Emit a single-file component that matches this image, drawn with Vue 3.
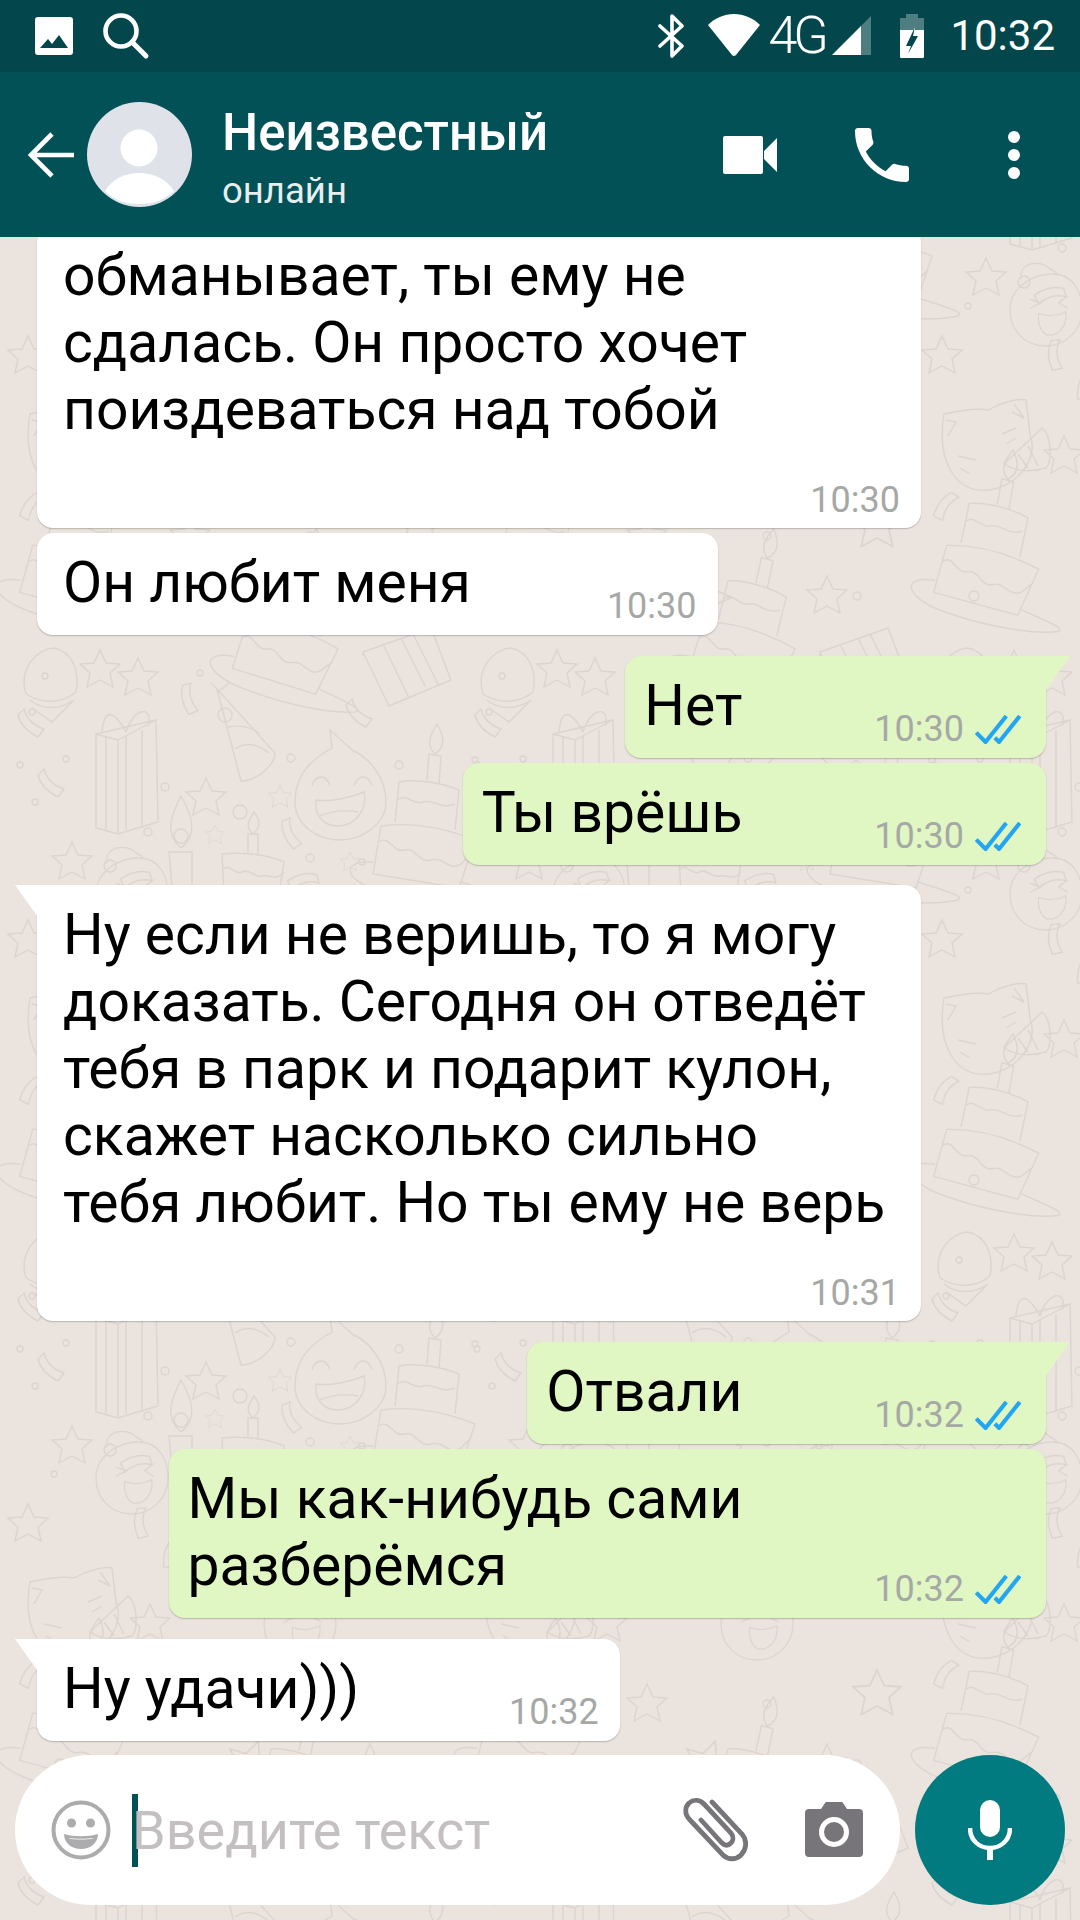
<template>
  <div class="screen">
    <!-- doodle wallpaper -->
    <svg class="wall" width="1080" height="1920" viewBox="0 0 1080 1920">
      <defs>
        <g id="d-gift">
          <path d="M-32 -38 L28 -52 L30 50 L-10 62 L-32 56 Z M-10 -32 L-10 62 M28 -52 L-10 -32 M-32 -38 L-10 -32" />
          <path d="M-22 -36 L-22 58 M-2 -36 L-2 58 M14 -42 L14 56 M-2 -40 C-14 -62 -24 -64 -26 -40 M-2 -40 C6 -66 26 -66 20 -46" />
        </g>
        <g id="d-hat">
          <path d="M-28 -46 L-4 46 C12 46 30 30 30 18 Z M-18 -8 C-6 -10 6 -8 14 -2 M-10 14 C2 6 14 10 24 18 M-34 -52 L-26 -44 L-16 -52" />
          <circle cx="-20" cy="-20" r="7" />
        </g>
        <g id="d-face">
          <path d="M-45 14 C-45 -18 -22 -32 -8 -40 L-10 -58 L12 -38 C30 -30 46 -10 46 14 C46 36 22 52 0 52 C-24 52 -45 36 -45 14 Z" />
          <path d="M-28 -2 C-24 -14 -14 -14 -10 -2 M14 -2 C18 -14 28 -14 32 -2 M-24 12 C-10 14 10 10 24 4 C28 20 16 38 -2 38 C-18 38 -26 26 -24 12 Z M-20 28 C-6 22 6 22 18 24" />
        </g>
        <g id="d-cake">
          <path d="M-30 -8 L-28 32 L26 40 L32 0 C14 -8 -10 -10 -30 -8 Z M-30 8 C-22 0 -18 14 -10 10 C-2 6 2 16 10 14 C18 12 24 20 32 10" />
          <path d="M-4 -10 L-4 -28 L6 -28 L6 -8 M1 -28 C-8 -36 -2 -44 2 -50 C8 -42 10 -36 1 -28" />
        </g>
        <g id="d-candle">
          <path d="M-11 -10 L12 -10 L12 48 L-6 48 Z M1 -14 C-18 -30 -6 -52 1 -66 C10 -50 20 -30 1 -14 Z" />
          <circle cx="1" cy="-26" r="7" />
        </g>
        <g id="d-big">
          <path d="M-44 -4 L-52 44 L34 58 L50 10 C20 -2 -14 -8 -44 -4 Z M-46 12 C-36 4 -32 24 -20 20 C-10 16 -6 34 6 30 C18 26 24 42 36 34 L46 24" />
          <path d="M-30 -8 L-26 -48 C-6 -52 20 -46 34 -40 L30 0 M-28 -30 C-18 -38 -12 -24 -2 -28 C8 -32 14 -20 30 -26 M2 -50 L4 -76 L16 -74 L14 -46 M10 -76 C0 -86 6 -96 12 -106 C18 -96 22 -84 10 -76" />
          <path d="M-52 32 C-86 30 -82 52 -40 62 C0 72 50 76 76 70 C84 66 60 60 36 52" />
        </g>
        <g id="d-ball">
          <path d="M-24 12 C-32 -14 -12 -34 4 -34 C22 -30 30 -12 26 10 M-24 12 C-8 22 12 22 26 10 M-20 18 C-8 28 10 28 24 18 L2 40 L-18 26" />
        </g>
        <g id="d-box">
          <path d="M-42 -16 L26 -40 L46 12 L-16 38 Z M-42 -16 L-42 -12 M-22 -24 L4 30 M-4 -30 L20 18 M8 -34 L34 18" />
        </g>
        <g id="d-cat">
          <path d="M-48 -34 C-30 -38 -16 -40 -4 -38 C10 -46 28 -50 34 -48 L38 -14 C46 8 30 36 -2 42 C-36 46 -56 14 -48 -34 Z" />
          <path d="M-46 -28 L-36 -26 L-44 -12 M22 -44 L32 -30 L20 -36 M-34 8 L-16 12 M-32 20 L-22 26 M10 -14 L24 -20 M14 -4 L24 -10" />
          <path d="M12 16 L50 -20 C60 -12 60 14 54 20 C40 24 24 24 12 16 Z M26 6 L36 20 M36 -2 L46 18" />
        </g>
        <g id="d-laugh">
          <path d="M-40 0 C-40 -26 -14 -40 8 -40 C30 -40 40 -20 40 0 C40 24 20 40 0 40 C-22 40 -40 24 -40 0 Z M-28 -34 C-30 -54 -6 -56 4 -46 C16 -40 12 -38 8 -40" />
          <path d="M-18 -12 L-6 -8 L-18 -2 M24 -16 L14 -8 L24 -2 M-8 4 C4 8 14 6 22 2 C24 18 14 28 4 28 C-4 28 -10 16 -8 4 Z" />
        </g>
        <path id="d-star" d="M0 -20 L6 -7 L20 -6 L10 3 L13 17 L0 10 L-13 17 L-10 3 L-20 -6 L-6 -7 Z" />
        <path id="d-conf" d="M-12 -10 C-10 -2 -4 6 8 12 L14 4 C2 0 -4 -8 -6 -16 Z" />
      </defs>
      <g v-for="(t, i) in tiles" :key="i" :transform="t">
        <use v-for="(d, j) in doodles" :key="j" :href="'#d-' + d[0]" :transform="`translate(${d[1]} ${d[2]}) rotate(${d[3] || 0}) scale(${d[4] || 1})`" />
        <circle v-for="(c, j) in rings" :key="'r' + j" :cx="c[0]" :cy="c[1]" :r="c[2]" />
      </g>
    </svg>

    <!-- status bar -->
    <div class="status">
      <div class="status-left">
        <svg width="40" height="40" viewBox="0 0 40 40"><path fill="#fff" fill-rule="evenodd" d="M4 1h32a3 3 0 0 1 3 3v32a3 3 0 0 1-3 3H4a3 3 0 0 1-3-3V4a3 3 0 0 1 3-3zM6 32h28L25 19l-7 9-4-5z" /></svg>
        <svg width="50" height="50" viewBox="0 0 50 50"><circle cx="20" cy="20" r="15.5" fill="none" stroke="#fff" stroke-width="4.6" /><path d="M31 31l14 14" stroke="#fff" stroke-width="5" stroke-linecap="round" /></svg>
      </div>
      <div class="status-right">
        <svg width="28" height="44" viewBox="0 0 28 44"><path d="M2 12l22 20-10 10V2l10 10L2 32" fill="none" stroke="#fff" stroke-width="3.6" stroke-linecap="round" stroke-linejoin="round" /></svg>
        <svg class="wifi" width="52" height="44" viewBox="0 0 52 44"><path fill="#fff" d="M0 11C7 4 16 0 26 0s19 4 26 11L28 41a3 3 0 0 1-4 0z" /></svg>
        <span class="net">4G</span>
        <svg class="sig" width="40" height="42" viewBox="0 0 40 42"><path fill="#fff" d="M0 40L29 11v29z" /><path fill="#fff" opacity=".3" d="M29 11L39 1v39H29z" /></svg>
        <svg class="batt" width="26" height="46" viewBox="0 0 26 46"><path fill="#fff" opacity=".3" d="M7 1h12v4h6v12H1V5h6z" /><path fill="#fff" fill-rule="evenodd" d="M1 17h24v27a1 1 0 0 1-1 1H2a1 1 0 0 1-1-1zM16 14l-9 19h5l-3 8 10-18h-5z" /></svg>
        <span class="clock">10:32</span>
      </div>
    </div>

    <!-- toolbar -->
    <div class="bar">
      <svg class="back" width="48" height="48" viewBox="0 0 48 48"><path d="M47 24H4M25 3L4 24l21 21" fill="none" stroke="#fff" stroke-width="4.6" /></svg>
      <div class="avatar">
        <svg width="105" height="105" viewBox="0 0 105 105"><circle cx="52.5" cy="52.5" r="52.5" fill="#dfe3e9" /><circle cx="52" cy="46" r="18.5" fill="#fff" /><path fill="#fff" d="M18 89c7-12 20-18 34-18s28 6 35 18c-9 9-21 13-35 13s-25-4-34-13z" /></svg>
      </div>
      <div class="who">
        <div class="name">Неизвестный</div>
        <div class="seen">онлайн</div>
      </div>
      <div class="actions">
        <svg width="56" height="38" viewBox="0 0 56 38"><path fill="#fff" d="M3 0h36a2 2 0 0 1 2 2v34a2 2 0 0 1-2 2H3a2 2 0 0 1-2-2V2a2 2 0 0 1 2-2zM42 15L55 2v34L42 23z" /></svg>
        <svg class="phone" width="72" height="72" viewBox="0 0 24 24"><path fill="#fff" d="M6.600 10.800c1.400 2.800 3.800 5.100 6.600 6.600l2.200-2.200c.3-.3.7-.4 1-.2 1.100.4 2.300.6 3.600.6.600 0 1 .4 1 1V20c0 .6-.4 1-1 1C10.600 21 3 13.400 3 4c0-.6.4-1 1-1h3.500c.6 0 1 .4 1 1 0 1.300.2 2.500.6 3.600.1.300 0 .7-.2 1z" /></svg>
        <div class="dots"><i></i><i></i><i></i></div>
      </div>
    </div>

    <!-- messages -->
    <div class="chat">
      <div
        v-for="(m, i) in messages"
        :key="i"
        class="msg"
        :class="[m.out ? 'out' : 'in', { tail: m.tail, stacked: m.stacked, group: m.group }, m.extra]"
      >
        <div class="text">{{ m.text }}</div>
        <div class="meta">
          <span class="time">{{ m.time }}</span>
          <svg v-if="m.out" width="46" height="29" viewBox="0 0 44 28"><path d="M1 17l9 9L30 1M19 22l4 4L43 1" fill="none" stroke="#22a5f3" stroke-width="4" /></svg>
        </div>
      </div>
    </div>

    <!-- input row -->
    <div class="footer">
      <div class="input">
        <svg class="smile" width="60" height="60" viewBox="0 0 60 60"><circle cx="30" cy="30" r="27.500" fill="none" stroke="#acabad" stroke-width="4" /><circle cx="20.500" cy="23" r="4.500" fill="#acabad" /><circle cx="39.500" cy="23" r="4.500" fill="#acabad" /><path fill="#acabad" d="M13 34c10 3 24 3 34 0 0 9-8 15-17 15s-17-6-17-15zm4 4c3 2 23 2 26 0-8 1-18 1-26 0z" /></svg>
        <div class="field">
          <span class="caret"></span>
          <span class="hint">Введите текст</span>
        </div>
        <svg class="clip" width="66" height="64" viewBox="0 0 66 64"><path d="M30 4L60 36c6 7 4 16-1 21s-13 5-18 0L8 22C2 16 3 9 7 5c5-4 11-3 15 1l27 29c3 4 2 8 0 10-3 3-6 3-9 0L19 22" fill="none" stroke="#77757a" stroke-width="4.800" stroke-linecap="round" /></svg>
        <svg class="cam" width="60" height="56" viewBox="0 0 60 56"><path fill="#77757a" fill-rule="evenodd" d="M17 7l4-6a2 2 0 0 1 2-1h14a2 2 0 0 1 2 1l4 6h12a4 4 0 0 1 4 4v40a4 4 0 0 1-4 4H5a4 4 0 0 1-4-4V11a4 4 0 0 1 4-4zm13 8a15 15 0 1 0 0 30 15 15 0 0 0 0-30zm0 5a10 10 0 1 1 0 20 10 10 0 0 1 0-20z" /></svg>
      </div>
      <div class="mic">
        <svg width="44" height="60" viewBox="0 0 44 60"><rect x="12" y="0" width="20" height="37" rx="10" fill="#fff" /><path d="M2 28c0 12 9 20 20 20s20-8 20-20" fill="none" stroke="#fff" stroke-width="4.500" /><path d="M22 46v14" stroke="#fff" stroke-width="6" /></svg>
      </div>
    </div>
  </div>
</template>

<script setup>
const tiles = []
for (let r = -1; r < 3; r++) {
  for (let c = 0; c < 3; c++) {
    tiles.push(`translate(${c * 457} ${640 + r * 584})`)
  }
}

// name, x, y, rotate, scale (y counted from the top of the tile)
const doodles = [
  ['gift', 128, 132],
  ['hat', 245, 95],
  ['face', 340, 148],
  ['cake', 252, 222],
  ['candle', 180, 222],
  ['big', 425, 190],
  ['ball', 50, 42],
  ['box', 405, 28],
  ['big', 290, -8, 8],
  ['cat', 78, 392],
  ['laugh', 132, 254, 0, 0.9],
  ['ball', 338, 285],
  ['big', 76, 498, 6],
  ['gift', 400, 340, -6, 0.8],
  ['laugh', 300, 400, 0, 0.9],
  ['hat', 210, 330, 100, 0.8],
  ['star', 100, 30],
  ['star', 138, 38],
  ['star', 72, 222],
  ['star', 206, 158],
  ['star', 280, 157, 0, 0.6],
  ['star', 350, 222, 0, 0.5],
  ['star', 215, 195, 0, 0.5],
  ['star', 28, 300],
  ['star', 150, 400],
  ['star', 190, 480],
  ['star', 250, 540, 20, 1.2],
  ['star', 420, 470, 0, 1.2],
  ['star', 370, 540],
  ['conf', 30, 85],
  ['conf', 188, 60, 30],
  ['conf', 50, 145],
  ['conf', 135, 238, 120],
  ['conf', 290, 195, 20],
  ['conf', 302, 240, 120],
  ['conf', 358, 75],
  ['conf', 170, 330, 60],
  ['conf', 140, 300, 40],
  ['conf', 30, 450, 80],
]

const rings = [
  [45, 36, 3], [200, 33, 3], [32, 72, 3], [66, 119, 3], [20, 125, 3], [35, 162, 3],
  [165, 147, 4], [148, 192, 4], [240, 172, 7], [291, 118, 4], [399, 125, 4], [475, 120, 3],
  [110, 226, 6], [54, 250, 3], [310, 218, 4], [362, 222, 3], [440, 262, 5], [200, 270, 4],
  [280, 280, 3], [360, 340, 5], [240, 380, 5], [60, 540, 5], [310, 480, 4], [400, 540, 4],
]

const messages = [
  { text: 'обманывает, ты ему не\nсдалась. Он просто хочет\nпоиздеваться над тобой', time: '10:30', stacked: true },
  { text: 'Он любит меня', time: '10:30', extra: 'wide-gap' },
  { text: 'Нет', time: '10:30', out: true, tail: true, group: true },
  { text: 'Ты врёшь', time: '10:30', out: true },
  { text: 'Ну если не веришь, то я могу\nдоказать. Сегодня он отведёт\nтебя в парк и подарит кулон,\nскажет насколько сильно\nтебя любит. Но ты ему не верь', time: '10:31', tail: true, stacked: true, group: true },
  { text: 'Отвали', time: '10:32', out: true, tail: true, group: true },
  { text: 'Мы как-нибудь сами\nразберёмся', time: '10:32', out: true },
  { text: 'Ну удачи)))', time: '10:32', tail: true, group: true, extra: 'wider-gap' },
]
</script>

<style>
html, body {
  margin: 0;
  background: #ebe3de;
}
</style>

<style scoped>
.screen {
  position: relative;
  width: 1080px;
  height: 1920px;
  display: flex;
  flex-direction: column;
  overflow: hidden;
  background: #ebe3de;
  font-family: Roboto, "Noto Sans", sans-serif;
}

.wall {
  position: absolute;
  inset: 0;
  fill: none;
  stroke: #dcd4ce;
  stroke-width: 1.4;
}

/* status bar */
.status {
  position: relative;
  height: 72px;
  flex: none;
  display: flex;
  align-items: center;
  justify-content: space-between;
  background: #03474c;
  color: #fff;
  padding: 0 25px 0 34px;
}
.status-left {
  display: flex;
  align-items: center;
  gap: 27px;
}
.status-right {
  display: flex;
  align-items: center;
}
.wifi { margin-left: 22px; }
.net {
  font-size: 52px;
  font-weight: 300;
  letter-spacing: -4px;
  line-height: 60px;
  margin-left: 8px;
  width: 64px;
}
.batt { margin-left: 27px; }
.clock {
  font-size: 42px;
  margin-left: 25px;
  line-height: 48px;
}

/* toolbar */
.bar {
  position: relative;
  z-index: 2;
  height: 165px;
  flex: none;
  display: flex;
  align-items: center;
  background: #025157;
  color: #fff;
  padding: 0 60px 0 27px;
}
.back { flex: none; }
.avatar {
  flex: none;
  width: 105px;
  height: 105px;
  margin-left: 12px;
}
.who {
  margin-left: 30px;
  padding-top: 6px;
  flex: 1;
}
.name {
  font-size: 51px;
  font-weight: 500;
  line-height: 56px;
}
.seen {
  font-size: 36.5px;
  line-height: 40px;
  margin-top: 10px;
  opacity: .9;
}
.actions {
  display: flex;
  align-items: center;
}
.phone { margin-left: 68px; }
.dots {
  margin-left: 90px;
  display: flex;
  flex-direction: column;
  gap: 6px;
}
.dots i {
  display: block;
  width: 12px;
  height: 12px;
  border-radius: 50%;
  background: #fff;
}

/* messages */
.chat {
  position: relative;
  flex: 1;
  min-height: 0;
  overflow: hidden;
  display: flex;
  flex-direction: column;
  justify-content: flex-end;
  padding: 0 34px 14px 37px;
}
.msg {
  position: relative;
  flex: none;
  display: flex;
  align-items: flex-end;
  box-sizing: border-box;
  border-radius: 16px;
  padding: 16px 21px 19px 26px;
  box-shadow: 0 1px 1.5px rgba(0, 0, 0, .22);
  margin-top: 5px;
  width: fit-content;
}
.msg.group { margin-top: 21px; }
.msg.stacked.group { margin-top: 20px; }
.msg.in {
  background: #fff;
  align-self: flex-start;
}
.msg.out {
  background: #e0f7c4;
  align-self: flex-end;
  padding-left: 19px;
  padding-right: 25px;
}
.msg.stacked {
  width: 884px;
  flex-direction: column;
  align-items: flex-start;
  padding-bottom: 8px;
}
.msg.stacked .meta {
  align-self: flex-end;
  margin: 37px 0 0;
}
.msg.tail.in { border-top-left-radius: 0; }
.msg.tail.out { border-top-right-radius: 0; }
.msg.tail::before {
  content: "";
  position: absolute;
  top: 0;
  width: 25px;
  height: 35px;
}
.msg.tail.in::before {
  left: -22px;
  background: #fff;
  clip-path: polygon(0 0, 100% 0, 100% 100%);
}
.msg.tail.out::before {
  right: -24px;
  background: #e0f7c4;
  clip-path: polygon(0 0, 100% 0, 0 100%);
}
.text {
  font-size: 57px;
  line-height: 67px;
  color: #000;
  white-space: pre-line;
}
.meta {
  display: flex;
  align-items: center;
  margin-left: 132px;
  margin-bottom: -10px;
  height: 40px;
}
.wide-gap .meta { margin-left: 136px; }
.wider-gap .meta { margin-left: 150px; }
.time {
  font-size: 36px;
  line-height: 40px;
  color: #a6a8a6;
}
.meta svg {
  margin-left: 11px;
}

/* input row */
.footer {
  position: relative;
  flex: none;
  display: flex;
  align-items: center;
  gap: 15px;
  padding: 0 15px 15px;
}
.input {
  width: 885px;
  height: 150px;
  box-sizing: border-box;
  border-radius: 75px;
  background: #fff;
  display: flex;
  align-items: center;
  padding-left: 36px;
}
.smile { flex: none; }
.field {
  flex: 1;
  display: flex;
  align-items: center;
  margin-left: 21px;
}
.caret {
  width: 6px;
  height: 73px;
  background: #025157;
}
.hint {
  font-size: 54px;
  color: #c4c0c2;
  margin-left: -6px;
}
.clip { flex: none; }
.cam {
  flex: none;
  margin-left: 56px;
  margin-right: 36px;
}
.mic {
  flex: none;
  width: 150px;
  height: 150px;
  border-radius: 50%;
  background: #017a80;
  display: flex;
  align-items: center;
  justify-content: center;
}
</style>
